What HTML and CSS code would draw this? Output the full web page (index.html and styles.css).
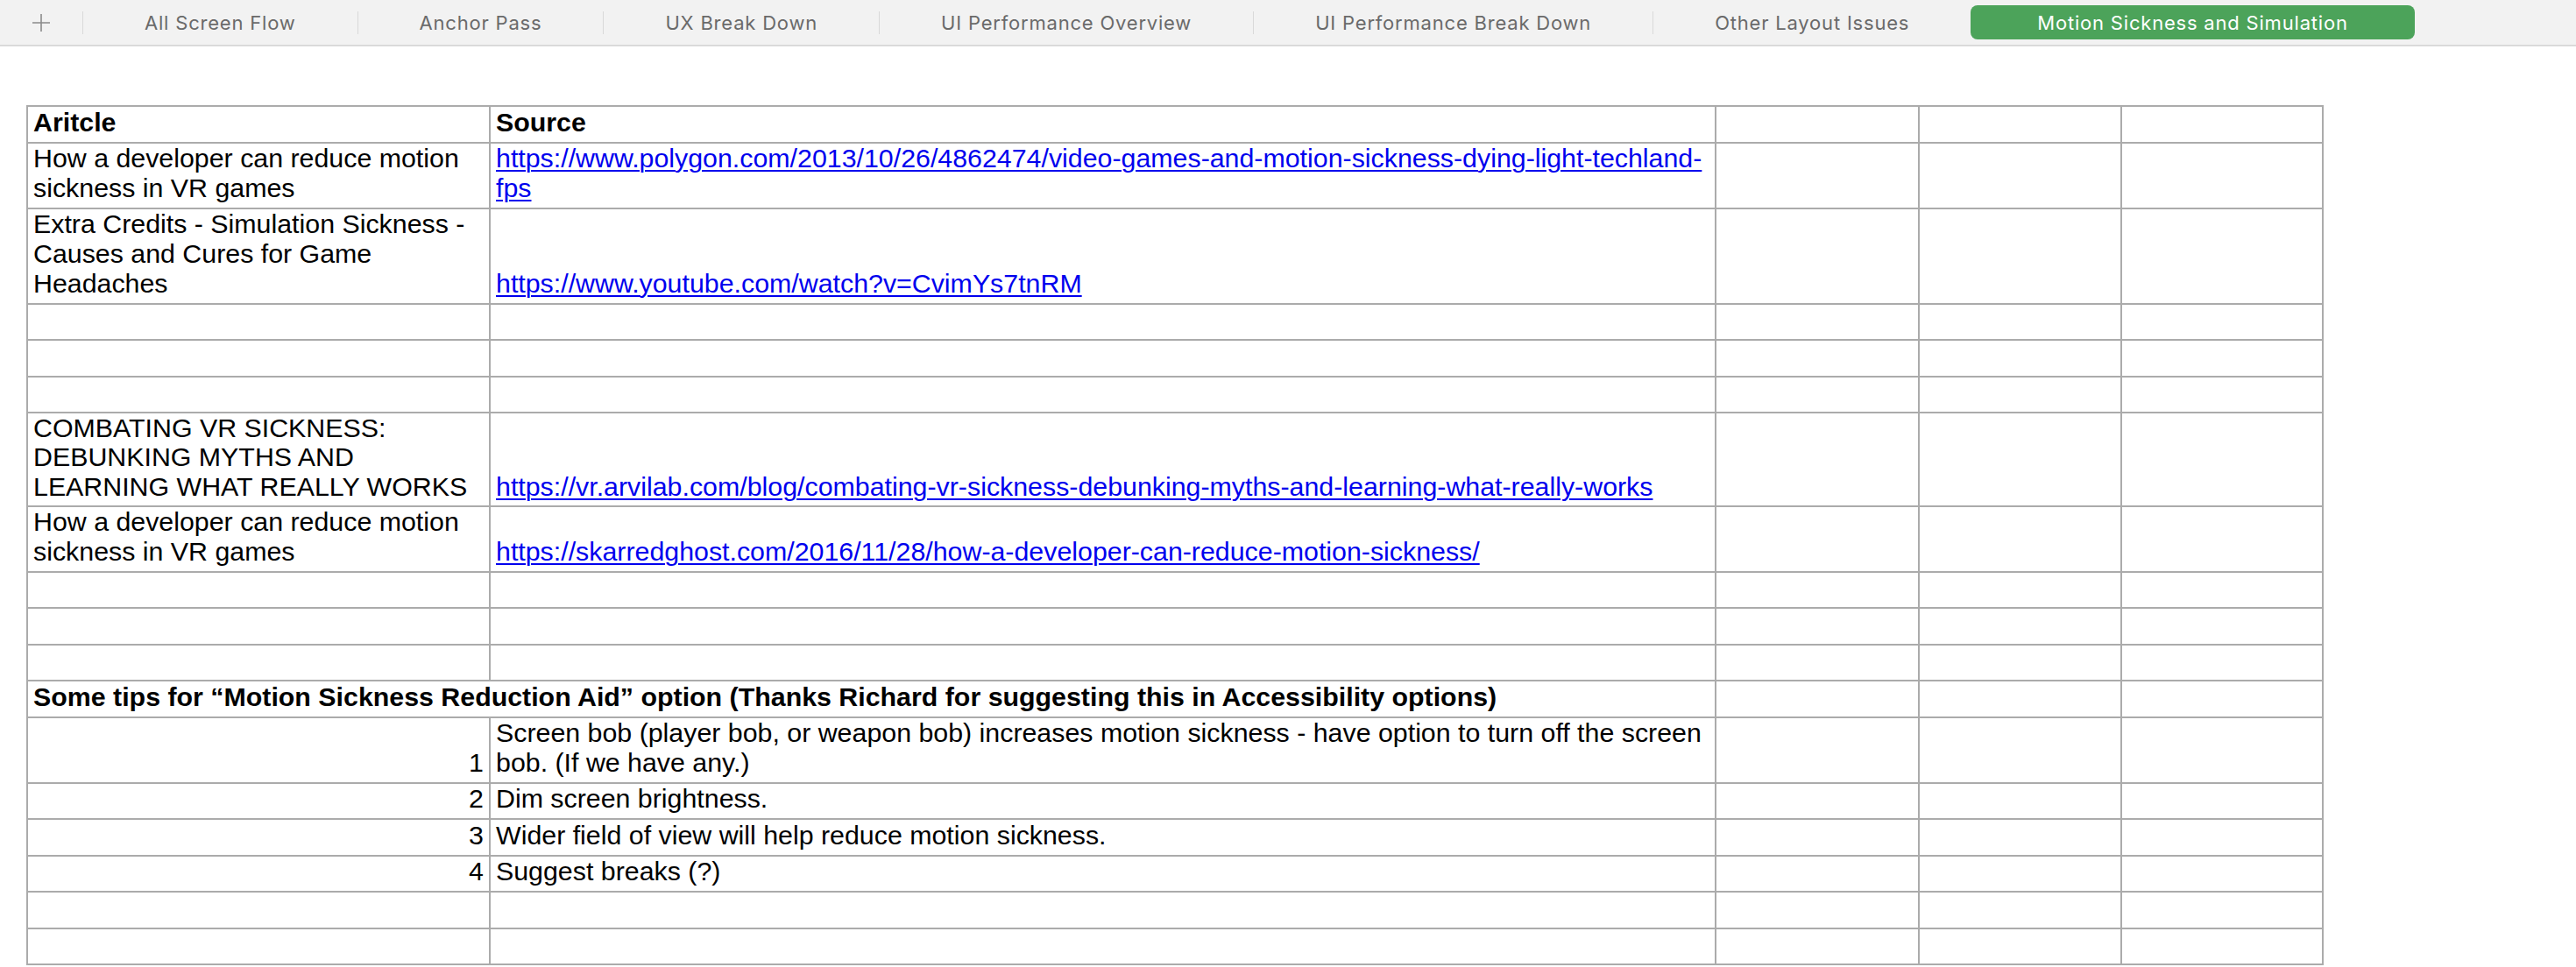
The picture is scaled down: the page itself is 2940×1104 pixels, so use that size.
FILE: index.html
```html
<!DOCTYPE html>
<html lang="en">
<head>
<meta charset="utf-8">
<title>Motion Sickness and Simulation</title>
<link rel="stylesheet" href="styles.css">
</head>
<body>
<div class="tabbar">
  <div class="add"><svg width="22" height="22" viewBox="0 0 22 22"><path d="M11 1v20M1 11h20" stroke="#8a8a8a" stroke-width="1.6" fill="none"/></svg></div>
  <span class="sep"></span><div class="tab">All Screen Flow</div>
  <span class="sep"></span><div class="tab">Anchor Pass</div>
  <span class="sep"></span><div class="tab">UX Break Down</div>
  <span class="sep"></span><div class="tab">UI Performance Overview</div>
  <span class="sep"></span><div class="tab">UI Performance Break Down</div>
  <span class="sep"></span><div class="tab">Other Layout Issues</div>
  <div class="tab active">Motion Sickness and Simulation</div>
</div>
<div class="sheet-wrap">
<table class="sheet">
  <colgroup><col class="c1"><col class="c2"><col class="c3"><col class="c4"><col class="c5"></colgroup>
  <tbody>
    <tr><th>Aritcle</th><th>Source</th><td></td><td></td><td></td></tr>
    <tr><td>How a developer can reduce motion<br>sickness in VR games</td><td><a href="#">https://www.polygon.com/2013/10/26/4862474/video-games-and-motion-sickness-dying-light-techland-<br>fps</a></td><td></td><td></td><td></td></tr>
    <tr><td>Extra Credits - Simulation Sickness -<br>Causes and Cures for Game<br>Headaches</td><td><a href="#">https://www.youtube.com/watch?v=CvimYs7tnRM</a></td><td></td><td></td><td></td></tr>
    <tr><td></td><td></td><td></td><td></td><td></td></tr>
    <tr><td></td><td></td><td></td><td></td><td></td></tr>
    <tr><td></td><td></td><td></td><td></td><td></td></tr>
    <tr class="tight"><td>COMBATING VR SICKNESS:<br>DEBUNKING MYTHS AND<br>LEARNING WHAT REALLY WORKS</td><td><a href="#">https://vr.arvilab.com/blog/combating-vr-sickness-debunking-myths-and-learning-what-really-works</a></td><td></td><td></td><td></td></tr>
    <tr><td>How a developer can reduce motion<br>sickness in VR games</td><td><a href="#">https://skarredghost.com/2016/11/28/how-a-developer-can-reduce-motion-sickness/</a></td><td></td><td></td><td></td></tr>
    <tr><td></td><td></td><td></td><td></td><td></td></tr>
    <tr><td></td><td></td><td></td><td></td><td></td></tr>
    <tr><td></td><td></td><td></td><td></td><td></td></tr>
    <tr><th colspan="2">Some tips for “Motion Sickness Reduction Aid” option (Thanks Richard for suggesting this in Accessibility options)</th><td></td><td></td><td></td></tr>
    <tr><td class="num">1</td><td>Screen bob (player bob, or weapon bob) increases motion sickness - have option to turn off the screen<br>bob. (If we have any.)</td><td></td><td></td><td></td></tr>
    <tr><td class="num">2</td><td>Dim screen brightness.</td><td></td><td></td><td></td></tr>
    <tr><td class="num">3</td><td>Wider field of view will help reduce motion sickness.</td><td></td><td></td><td></td></tr>
    <tr><td class="num">4</td><td>Suggest breaks (?)</td><td></td><td></td><td></td></tr>
    <tr><td></td><td></td><td></td><td></td><td></td></tr>
    <tr><td></td><td></td><td></td><td></td><td></td></tr>
  </tbody>
</table>
</div>
</body>
</html>
```

FILE: styles.css
```css
* { box-sizing: border-box; }
html, body { margin: 0; padding: 0; background: #ffffff; }

.tabbar {
  display: flex;
  align-items: center;
  height: 53px;
  background: #f2f2f2;
  border-bottom: 2px solid #dadada;
  font-family: Inter, "Liberation Sans", sans-serif;
  font-size: 22px;
  letter-spacing: 0.8px;
  color: #6a6a6a;
}
.add { width: 94px; display: flex; justify-content: center; align-items: center; flex: none; }
.add svg { display: block; }
.sep { width: 1px; height: 26px; background: #d9d9d9; flex: none; }
.tab { padding: 0 70px; white-space: nowrap; flex: none; }
.tab.active {
  height: 39px;
  display: flex;
  align-items: center;
  padding: 0 76px;
  background: #4ca35a;
  color: #ffffff;
  border-radius: 8px;
}

.sheet-wrap { padding: 67px 0 0 30px; }
.sheet {
  border-collapse: collapse;
  table-layout: fixed;
  width: 2620px;
  font-family: "Liberation Sans", Arial, sans-serif;
  font-size: 30.35px;
  line-height: 34px;
  color: #000000;
}
.c1 { width: 528px; }
.c2 { width: 1399px; }
.c3 { width: 232px; }
.c4 { width: 231px; }
.c5 { width: 230px; }
.sheet tr { height: 41.5px; }
.sheet tr.tight { line-height: 33.33px; }
.sheet td, .sheet th {
  border: 2px solid #ababab;
  padding: 0 6px 5px 6px;
  vertical-align: bottom;
  text-align: left;
  font-weight: normal;
  white-space: nowrap;
}
.sheet th { font-weight: bold; }
.sheet td.num { text-align: right; padding-right: 6px; }
.sheet a { color: #0000ee; text-decoration: underline; text-decoration-thickness: 2px; text-underline-offset: 3px; }
```
